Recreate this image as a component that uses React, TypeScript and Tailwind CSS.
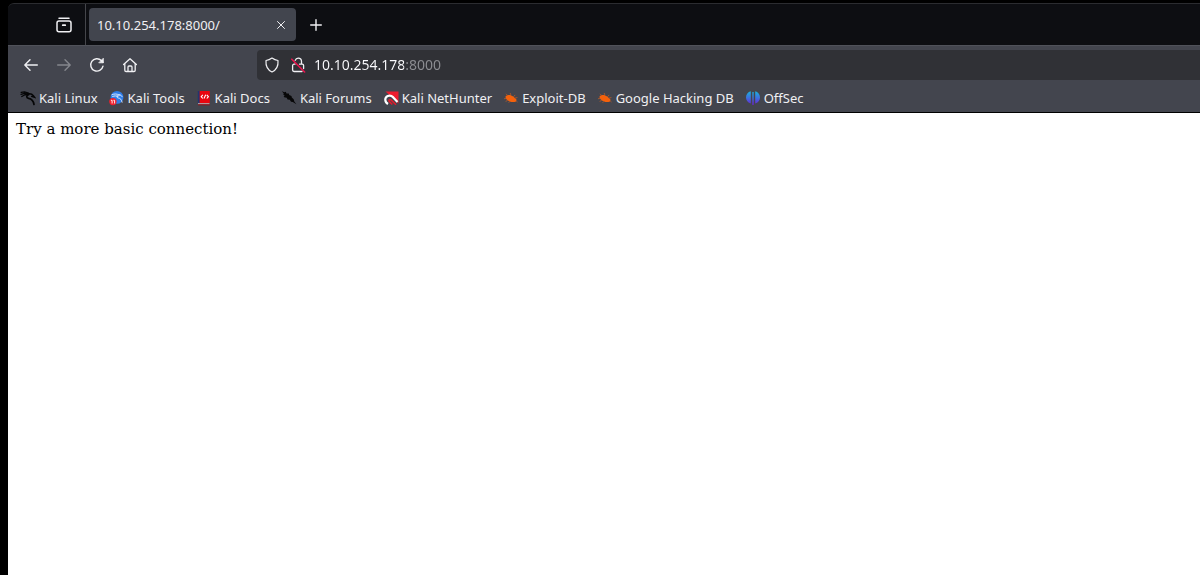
import React, { useState } from 'react';

type IconProps = { className?: string };

function RecentIcon({ className }: IconProps) {
  return (
    <svg className={className} viewBox="0 0 16 16" fill="none" stroke="currentColor" strokeWidth={1.5} strokeLinecap="round">
      <path d="M3 1.2h10" />
      <rect x="1" y="4" width="14" height="10.8" rx="2" />
      <path d="M6.8 8.2h2.4" strokeWidth={1.8} />
    </svg>
  );
}

function BackIcon({ className }: IconProps) {
  return (
    <svg className={className} viewBox="0 0 16 16" fill="none" stroke="currentColor" strokeWidth={1.4} strokeLinecap="round" strokeLinejoin="round">
      <path d="M14.3 8H2M7 2.8 1.8 8 7 13.2" />
    </svg>
  );
}

function ForwardIcon({ className }: IconProps) {
  return (
    <svg className={className} viewBox="0 0 16 16" fill="none" stroke="currentColor" strokeWidth={1.4} strokeLinecap="round" strokeLinejoin="round">
      <path d="M1.7 8H14M9 2.8 14.2 8 9 13.2" />
    </svg>
  );
}

function ReloadIcon({ className }: IconProps) {
  return (
    <svg className={className} viewBox="0 0 16 16" fill="none" stroke="currentColor" strokeWidth={1.4} strokeLinecap="round" strokeLinejoin="round">
      <path d="M14 9.2A6.2 6.2 0 1 1 12.3 3.5L14 5.2" />
      <path d="M14.3 1.6v4.2h-4.2z" fill="currentColor" strokeWidth={0.8} />
    </svg>
  );
}

function HomeIcon({ className }: IconProps) {
  return (
    <svg className={className} viewBox="0 0 16 16" fill="none" stroke="currentColor" strokeWidth={1.3} strokeLinecap="round" strokeLinejoin="round">
      <path d="M1.6 7.6 8 1.7l6.4 5.9" />
      <path d="M2.8 6.8v6.4c0 .8.5 1.3 1.3 1.3h7.8c.8 0 1.3-.5 1.3-1.3V6.8" />
      <path d="M6 14.3V10c0-.6.4-1 1-1h2c.6 0 1 .4 1 1v4.3" />
    </svg>
  );
}

function ShieldIcon({ className }: IconProps) {
  return (
    <svg className={className} viewBox="0 0 16 16" fill="none" stroke="currentColor" strokeWidth={1.2} strokeLinejoin="round">
      <path d="M8 1.1c1.7 1.2 3.8 2.1 6 2.4.4 4.8-1.4 9.3-6 11.5-4.6-2.2-6.4-6.7-6-11.5 2.2-.3 4.3-1.2 6-2.4z" />
    </svg>
  );
}

function InsecureIcon({ className }: IconProps) {
  return (
    <svg className={className} viewBox="0 0 16 16" fill="none" stroke="currentColor" strokeWidth={1.3} strokeLinecap="round">
      <path d="M5.2 3.4C5.7 2 6.8 1.2 8.2 1.2c1.9 0 3.3 1.4 3.3 3.3v2.7M9.5 7.2h2.700c.8 0 1.400.6 1.400 1.400v3" />
      <path d="M5 7.2H4c-.8 0-1.4.6-1.4 1.4v4.5c0 .8.6 1.4 1.4 1.4h8" />
      <path d="M1.8 2.2 14.6 15" stroke="#e8154e" strokeWidth={1.6} />
    </svg>
  );
}

function KaliDragonIcon() {
  return (
    <svg className="size-4 shrink-0" viewBox="0 0 16 16" fill="none" stroke="#050506" strokeLinecap="round">
      <path d="M1.2 2.3 4.5 1.9 8.5 3.2M1 4.3 4.5 3.3 8.3 4.3M1.8 6.5 5 4.8 8 4.9" strokeWidth={1.3} />
      <path d="M8.8 4.5C6.2 5.3 6 7.8 8.6 8.3c3.200.5 4.800 2.200 5.400 6.200" strokeWidth={1.7} />
      <path d="M8 4c2.2-.6 4-.1 5.4 1.7l1.2 1.600-3-.9" strokeWidth={1.4} />
    </svg>
  );
}

function KaliToolsIcon() {
  return (
    <svg className="size-4 shrink-0" viewBox="0 0 16 16" fill="none">
      <circle cx="8" cy="7.4" r="6.4" fill="#2f7de8" />
      <path
        d="M3 4.7c2.6-1.2 5-.9 7.4.4M3.6 6.5c2-.8 3.6-.8 5.4-.2M9.4 5.2c-2 .6-2 2.5-.1 2.8 2 .3 3.3 1.5 3.8 4.2M10.3 4.7c1.5.1 2.2.8 2.8 2"
        stroke="#e8f1ff"
        strokeWidth={0.9}
        strokeLinecap="round"
      />
      <circle cx="3.9" cy="11.6" r="3.7" fill="#ee1f2d" />
      <path d="M1.9 10.3h1.200v3.200M4.400 10.3h1.200v3.200" stroke="#fff" strokeWidth={0.9} />
    </svg>
  );
}

function KaliDocsIcon() {
  return (
    <svg className="size-4 shrink-0" viewBox="0 0 16 16" fill="none">
      <path d="M1.8 1h2.4v12.5H1.8z" fill="#22356f" />
      <path d="M3.600 1h10.200v12.300H3.600z" fill="#e9060f" />
      <path d="M2 13.3h11.400v1H2z" fill="#cfc5c8" />
      <path d="M2 14.3h11.800v1H2z" fill="#9b1017" />
      <path d="M6.800 4.800 5.200 6.700l1.600 1.800M10.800 4.800l1.600 1.900-1.600 1.800M8 8.500l1.700-3.700" stroke="#fff" strokeWidth={1.1} />
    </svg>
  );
}

function KaliForumsIcon() {
  return (
    <svg className="size-4 shrink-0" viewBox="0 0 16 16">
      <path
        d="M.8 1.2 3.4 2.2l1.4-.5.7 1.7 2.3.2.4 1.500 2.300.8.300 1.700 1.900 1.600.6 2.200 2.100 2.900-3.600-2.200-1.800-.3-1.200-2-2.200-.2L5.700 7.700 3.200 7.200l-.6-.9 1.200-.4L2.200 4.200l.6-.6z"
        fill="#070708"
      />
    </svg>
  );
}

function NetHunterIcon() {
  return (
    <svg className="size-4 shrink-0" viewBox="0 0 16 16" fill="none">
      <path d="M2.5 1.500h13v12z" fill="#ed1c2e" />
      <path d="M5 14C1.400 11.800 1.400 7.500 4.800 6c2-.9 4-.1 5.500 1.400l4.200 4.600" stroke="#fff" strokeWidth={2.200} />
      <path d="M13 14.800 8 9.900C6.700 8.800 5.200 10.300 6.300 11.500l3 3" stroke="#e31b2b" strokeWidth={1.600} />
    </svg>
  );
}

function BugIcon() {
  return (
    <svg className="size-4 shrink-0" viewBox="0 0 16 16" fill="none">
      <path d="M2.600 6.300C4.600 4.300 8 4.500 10.200 6.600l3.300 2.900-.5 2c-2.600 1.100-6 .7-8.400-1.200C3 9 2.400 7.700 2.600 6.300z" fill="#f4610c" />
      <path
        d="M4.500 5.400 3 3.800M7.800 4.900 7.200 3M10.500 6.800l1.700-1.900M11.800 8.200l2.600-.7M3 8.300l-2 .5M4.600 10.400l-2 1M7 11.300l-1.400 1.500M13 10.600l1.500 1.400"
        stroke="#b95a28"
        strokeWidth={0.8}
      />
    </svg>
  );
}

function OffSecIcon() {
  return (
    <svg className="size-4 shrink-0" viewBox="0 0 16 16">
      <defs>
        <linearGradient id="offsec" gradientUnits="userSpaceOnUse" x1="0" y1="1" x2="0" y2="15">
          <stop offset="0" stopColor="#19b4dc" />
          <stop offset="0.5" stopColor="#3d6fe0" />
          <stop offset="1" stopColor="#6a1fd0" />
        </linearGradient>
      </defs>
      <path
        d="M5.800 1.300v12.200C3 12.800 1 10.300 1 7.400s2-5.400 4.800-6.100zM10.200 1.300v12.200C13 12.800 15 10.300 15 7.400s-2-5.400-4.800-6.100zM7.300 2h1.400v13H7.300z"
        fill="url(#offsec)"
      />
    </svg>
  );
}

const bookmarks = [
  { label: 'Kali Linux', Icon: KaliDragonIcon },
  { label: 'Kali Tools', Icon: KaliToolsIcon },
  { label: 'Kali Docs', Icon: KaliDocsIcon },
  { label: 'Kali Forums', Icon: KaliForumsIcon },
  { label: 'Kali NetHunter', Icon: NetHunterIcon },
  { label: 'Exploit-DB', Icon: BugIcon },
  { label: 'Google Hacking DB', Icon: BugIcon },
  { label: 'OffSec', Icon: OffSecIcon },
];

export default function App() {
  const [url, setUrl] = useState('10.10.254.178:8000');

  return (
    <div className="min-h-screen bg-black pl-2 pt-[3px] flex flex-col font-['Noto_Sans',sans-serif] text-[#f0f0f3]">
      {/* Tab strip */}
      <div className="flex h-[42px] shrink-0 border-t border-[#2b2c30] bg-[#0d0e12] rounded-tl-md">
        <div className="flex w-[78px] items-center justify-end border-r border-[#45464b] pr-[13px]">
          <button type="button" aria-label="Recent browsing" className="flex size-4">
            <RecentIcon className="size-4" />
          </button>
        </div>
        <div className="flex items-center pl-[3px]">
          <div className="flex h-[33px] w-[207px] items-center justify-between rounded bg-[#42454e] pl-2 pr-[7px]">
            <span className="text-[13px] leading-5">10.10.254.178:8000/</span>
            <button type="button" aria-label="Close tab" className="flex size-4 items-center justify-center">
              <svg className="size-2" viewBox="0 0 8 8" stroke="currentColor" strokeLinecap="round">
                <path d="M.5.5l7 7M7.5.5l-7 7" />
              </svg>
            </button>
          </div>
          <button type="button" aria-label="New tab" className="ml-3 flex size-4 items-center justify-center">
            <svg className="size-3" viewBox="0 0 12 12" stroke="currentColor" strokeWidth={1.4} strokeLinecap="round">
              <path d="M6 .7v10.6M.7 6h10.6" />
            </svg>
          </button>
        </div>
      </div>

      {/* Navigation toolbar */}
      <div className="flex h-[38px] shrink-0 items-center border-t border-[#50525a] bg-[#43454e] pl-[15px]">
        <div className="flex w-[234px] shrink-0 items-center gap-[17px]">
          <button type="button" aria-label="Back" className="flex">
            <BackIcon className="size-4" />
          </button>
          <button type="button" aria-label="Forward" disabled className="flex text-[#85878d]">
            <ForwardIcon className="size-4" />
          </button>
          <button type="button" aria-label="Reload" className="flex">
            <ReloadIcon className="size-4" />
          </button>
          <button type="button" aria-label="Home" className="flex">
            <HomeIcon className="size-4" />
          </button>
        </div>
        <div className="flex h-[30px] flex-1 items-center rounded-l bg-[#303136] pl-[7px]">
          <ShieldIcon className="size-4 shrink-0" />
          <InsecureIcon className="ml-[10px] size-4 shrink-0" />
          {/* host part is bright, the port is dimmed */}
          <input
            type="text"
            aria-label="Address"
            value={url}
            onChange={(e) => setUrl(e.target.value)}
            className="ml-2 min-w-0 flex-1 bg-[linear-gradient(to_right,#fbfbfe_90px,#8d8e93_90px)] bg-clip-text text-sm text-transparent caret-white outline-none"
          />
        </div>
      </div>

      {/* Bookmarks bar */}
      <nav className="flex h-[30px] shrink-0 items-center gap-[11px] border-b border-black bg-[#43454e] pl-3">
        {bookmarks.map(({ label, Icon }) => (
          <a key={label} href="#" className="flex items-center gap-[3px] whitespace-nowrap text-[13px] leading-5">
            <Icon />
            {label}
          </a>
        ))}
      </nav>

      {/* Page */}
      <main className="flex-1 bg-white px-2 py-[6px] font-['DejaVu_Serif',serif] text-[15px] leading-5 text-black">
        Try a more basic connection!
      </main>
    </div>
  );
}
